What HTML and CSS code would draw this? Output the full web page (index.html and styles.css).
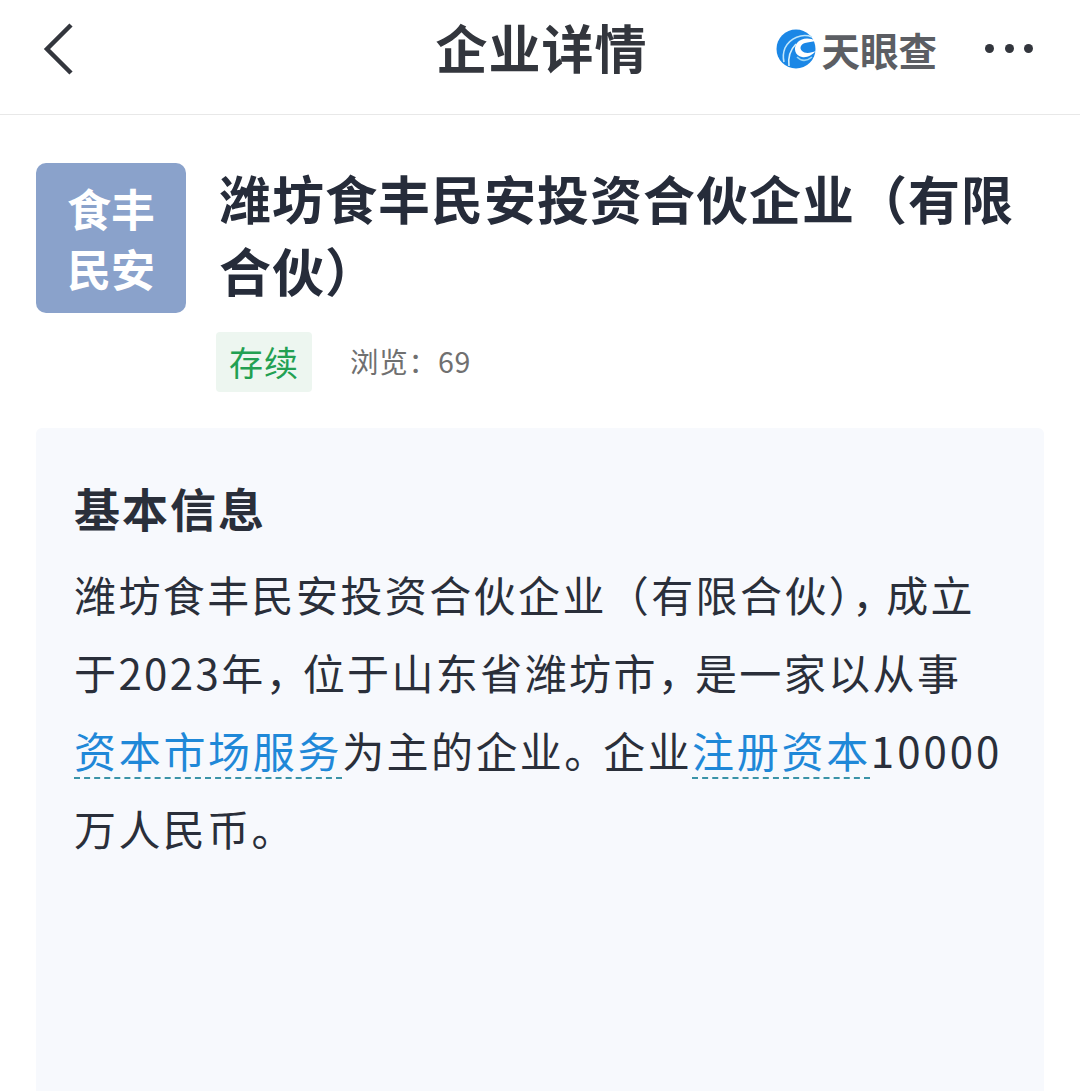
FILE: index.html
```html
<!DOCTYPE html>
<html lang="zh-CN">
<head>
    <meta charset="UTF-8">
    <meta name="viewport" content="width=device-width, initial-scale=1.0">
    <title>企业详情</title>
    <link rel="stylesheet" href="styles.css">
</head>
<body>
    <header class="topbar">
        <svg class="back" width="32" height="54" viewBox="0 0 32 54"><path d="M29 3 L5 27 L29 51" fill="none" stroke="#33363d" stroke-width="4.5"/></svg>
        <h1 class="page-title">企业详情</h1>
        <div class="topbar-right">
            <svg class="brand-logo" width="40" height="40" viewBox="0 0 40 40">
                <circle cx="20" cy="20" r="19.5" fill="#1b87e6"/>
                <path d="M40 12 C33 8 25 9 21 14 C17 19 19 27 26 28 C31 29 36 26 40 22 C35 24 29 25 26 22 C23 19 25 15 29 14 C32 13 36 13 40 12 Z" fill="#fff"/>
                <path d="M36 8 C26 4 14 9 9 19 C7 24 7 29 8 33" fill="none" stroke="#bfe6fb" stroke-width="1.6"/>
                <path d="M20 15 C14 21 12 29 13 37" fill="none" stroke="#d7f0fc" stroke-width="1.6"/>
                <path d="M21 28 C26 33 31 32 36 28" fill="none" stroke="#9ad7f7" stroke-width="1.6"/>
            </svg>
            <span class="brand-name">天眼查</span>
            <div class="more"><i></i><i></i><i></i></div>
        </div>
    </header>

    <main class="content">
        <section class="company">
            <div class="avatar">食丰<br>民安</div>
            <div class="company-info">
                <h2 class="company-name">潍坊食丰民安投资合伙企业（有限合伙）</h2>
                <div class="meta">
                    <span class="status">存续</span>
                    <span class="views">浏览：69</span>
                </div>
            </div>
        </section>

        <section class="card">
            <h3 class="card-title">基本信息</h3>
            <p class="card-text">潍坊食丰民安投资合伙企业（有限合伙）<span class="comma-tight">，</span>成立于2023年<span class="comma">，</span>位于山东省潍坊市<span class="comma">，</span>是一家以从事<br><a href="#">资本市场服务</a>为主的企业<span class="period">。</span>企业<a href="#">注册资本</a><span class="amount">10000</span>万人民币。</p>
        </section>
    </main>
</body>
</html>
```

FILE: styles.css
```css
html, body {
    height: 1091px;
    overflow: hidden;
}

body {
    margin: 0;
    background: white;
    color: #2a2f3a;
    font-family: "Noto Sans CJK SC", "Noto Sans", sans-serif;
}

.topbar {
    display: grid;
    grid-template-columns: 1fr auto 1fr;
    align-items: center;
    height: 115px;
    padding: 0 47px 17px;
    border-bottom: 1px solid #e8e8e8;
    box-sizing: border-box;
}

.back {
    margin-left: -5px;
}

.page-title {
    margin: 0 0 4px 3px;
    font-size: 52px;
    letter-spacing: 1px;
    font-weight: 700;
    color: #33363d;
    line-height: 60px;
}

.topbar-right {
    display: flex;
    align-items: center;
    justify-content: flex-end;
}

.brand-name {
    margin-left: 5px;
    font-size: 38.5px;
    line-height: 40px;
    font-weight: 700;
    color: #5c5e63;
}

.more {
    display: flex;
    gap: 10.5px;
    margin-left: 48px;
}

.more i {
    width: 9px;
    height: 9px;
    border-radius: 50%;
    background: #33363d;
}

.content {
    padding: 48px 36px 0;
}

.company {
    display: flex;
    gap: 33px;
}

.avatar {
    flex: none;
    width: 150px;
    height: 150px;
    border-radius: 10px;
    background: #8aa2cb;
    color: white;
    font-size: 44px;
    font-weight: 700;
    line-height: 60px;
    text-align: center;
    padding-top: 15px;
    box-sizing: border-box;
}

.company-info {
    flex: 1;
    min-width: 0;
}

.company-name {
    margin: -1px 0 0;
    font-size: 52px;
    letter-spacing: 1px;
    line-height: 72px;
    font-weight: 700;
    color: #262c3a;
}

.meta {
    display: flex;
    align-items: center;
    margin-top: 26px;
    margin-left: -3px;
}

.status {
    padding: 0 13px;
    height: 60px;
    line-height: 60px;
    border-radius: 4px;
    background: #edf6f0;
    color: #22a052;
    font-size: 34px;
    letter-spacing: 1px;
}

.views {
    margin: 0 0 3px 38px;
    font-size: 28.5px;
    letter-spacing: 0.8px;
    color: #707070;
}

.card {
    margin-top: 36px;
    height: 640px;
    padding: 49px 40px 0 38px;
    border-radius: 6px;
    background: #f7f9fd;
}

.card-title {
    margin: 0;
    font-size: 46px;
    letter-spacing: 2px;
    line-height: 60px;
    font-weight: 700;
    color: #2a2f3a;
}

.card-text {
    margin: 18px 0 0;
    font-size: 42px;
    letter-spacing: 2.4px;
    line-height: 78px;
    color: #2a2f3a;
}

.comma {
    letter-spacing: -5px;
}

.comma-tight {
    letter-spacing: -8px;
}

.period {
    letter-spacing: -3px;
}

.amount {
    letter-spacing: 3px;
}

.card-text a {
    color: #1f88d8;
    letter-spacing: 2.7px;
    text-decoration: underline dashed #3a93a8 2px;
    text-underline-offset: 9px;
}
```
